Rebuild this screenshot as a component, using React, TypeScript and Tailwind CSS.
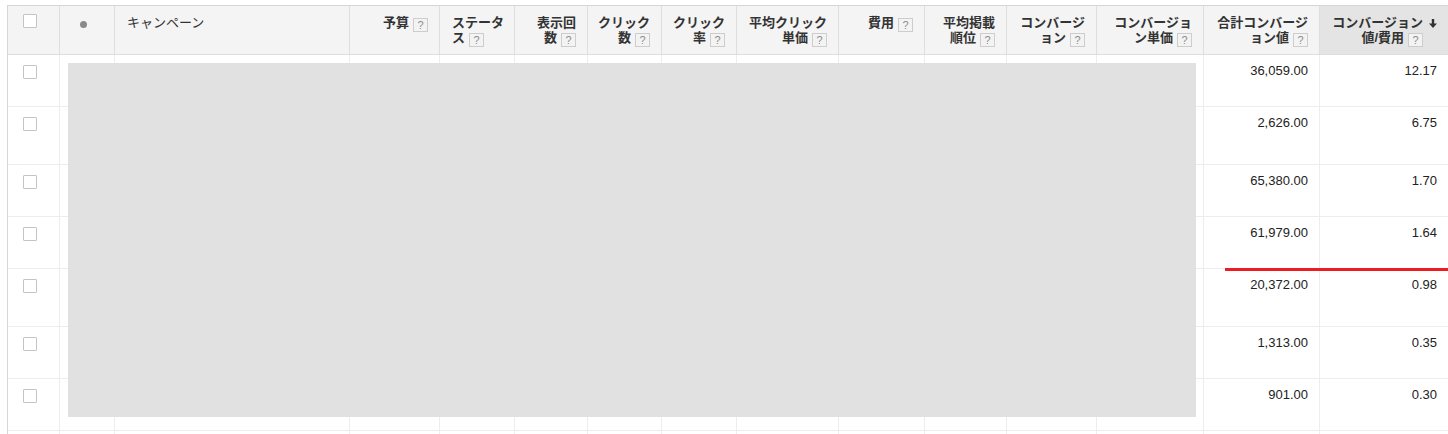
import type { ReactNode } from "react";

type Head = {
  l1: string;
  l2?: string;
  align?: "left" | "right";
  sorted?: boolean;
};

const HEADS: Head[] = [
  { l1: "予算" },
  { l1: "ステータ", l2: "ス", align: "left" },
  { l1: "表示回", l2: "数" },
  { l1: "クリック", l2: "数" },
  { l1: "クリック", l2: "率" },
  { l1: "平均クリック", l2: "単価" },
  { l1: "費用" },
  { l1: "平均掲載", l2: "順位" },
  { l1: "コンバージ", l2: "ョン" },
  { l1: "コンバージョ", l2: "ン単価" },
  { l1: "合計コンバージ", l2: "ョン値" },
  { l1: "コンバージョン", l2: "値/費用", sorted: true },
];

const ROWS = [
  { h: "h-[52px]", total: "36,059.00", roas: "12.17" },
  { h: "h-[58px]", total: "2,626.00", roas: "6.75" },
  { h: "h-[52px]", total: "65,380.00", roas: "1.70" },
  { h: "h-[52px]", total: "61,979.00", roas: "1.64" },
  { h: "h-[58px]", total: "20,372.00", roas: "0.98" },
  { h: "h-[52px]", total: "1,313.00", roas: "0.35" },
  { h: "h-[52px]", total: "901.00", roas: "0.30" },
  { h: "h-[52px]", total: "", roas: "" },
];

const GRID =
  "grid grid-cols-[52px_55px_235px_90px_75px_73px_74px_75px_102px_86px_82px_90px_107px_116px_129px]";

function Help() {
  return (
    <span className="ml-[4px] inline-block h-[14px] w-[15px] border border-[#cdcdcd] bg-[#f3f3f3] text-center align-[-2px] font-['Liberation_Sans',sans-serif] text-[11px] font-normal leading-[12px] text-[#8c8c8c]">
      ?
    </span>
  );
}

function Checkbox() {
  return <div className="h-[14px] w-[14px] rounded-[1px] border border-[#c4c4c4] bg-white" />;
}

function HeadCell({ head }: { head: Head }) {
  const lines: ReactNode = head.l2 ? (
    <>
      {head.l1}
      <br />
      {head.l2}
      <Help />
    </>
  ) : (
    <>
      {head.l1}
      <Help />
    </>
  );

  if (head.sorted) {
    return (
      <div className="flex justify-end border-r border-b border-[#dedede] bg-[#e4e4e4] pt-[9px] pr-[11px]">
        <div className="whitespace-nowrap text-right">{lines}</div>
        <svg width="8" height="9" viewBox="0 0 8 9" className="mt-[4px] ml-[6px] shrink-0">
          <path d="M2.8 0h2.4v4.6H8L4 9 0 4.6h2.8z" fill="#333" />
        </svg>
      </div>
    );
  }

  return (
    <div
      className={
        head.align === "left"
          ? "whitespace-nowrap border-r border-b border-[#dedede] pt-[9px] pl-3 text-left"
          : "whitespace-nowrap border-r border-b border-[#dedede] pt-[9px] pr-[11px] text-right"
      }
    >
      {lines}
    </div>
  );
}

export default function App() {
  return (
    <div className="relative h-[434px] overflow-hidden bg-white font-['Liberation_Sans','Noto_Sans_CJK_JP',sans-serif] text-[13px] text-[#222]">
      <div className="mt-[5px] ml-[7px] w-[1442px] border-t border-l border-[#d6d6d6]">
        {/* header */}
        <div className={`${GRID} h-[49px] bg-[#f4f4f4] font-bold leading-[15px] text-[#333]`}>
          <div className="border-r border-b border-[#dedede] pt-[8px] pl-[15px]">
            <Checkbox />
          </div>
          <div className="border-r border-b border-[#dedede] pt-[15px] pl-[20px]">
            <div className="h-[7px] w-[7px] rounded-full bg-[#8a8a8a]" />
          </div>
          <div className="border-r border-b border-[#dedede] pt-[9px] pl-3 font-normal">キャンペーン</div>
          {HEADS.map((h) => (
            <HeadCell key={h.l1 + (h.l2 ?? "")} head={h} />
          ))}
        </div>

        {/* rows */}
        {ROWS.map((r, i) => (
          <div key={i} className={`${GRID} ${r.h} leading-[15px]`}>
            <div className="border-r border-b border-[#ededed] pt-[10px] pl-[15px]">
              <Checkbox />
            </div>
            {Array.from({ length: 12 }).map((_, j) => (
              <div key={j} className="border-r border-b border-[#ededed]" />
            ))}
            <div className="border-r border-b border-[#ededed] pt-[8px] pr-[11px] text-right">{r.total}</div>
            <div className="border-r border-b border-[#ededed] pt-[8px] pr-[11px] text-right">{r.roas}</div>
          </div>
        ))}
      </div>

      {/* redaction block */}
      <div className="absolute top-[63px] left-[68px] h-[354px] w-[1128px] bg-[#e1e1e1]" />
      {/* annotation line */}
      <div className="absolute top-[268px] left-[1225px] h-[3px] w-[223px] bg-[#ed1c24]" />
    </div>
  );
}
